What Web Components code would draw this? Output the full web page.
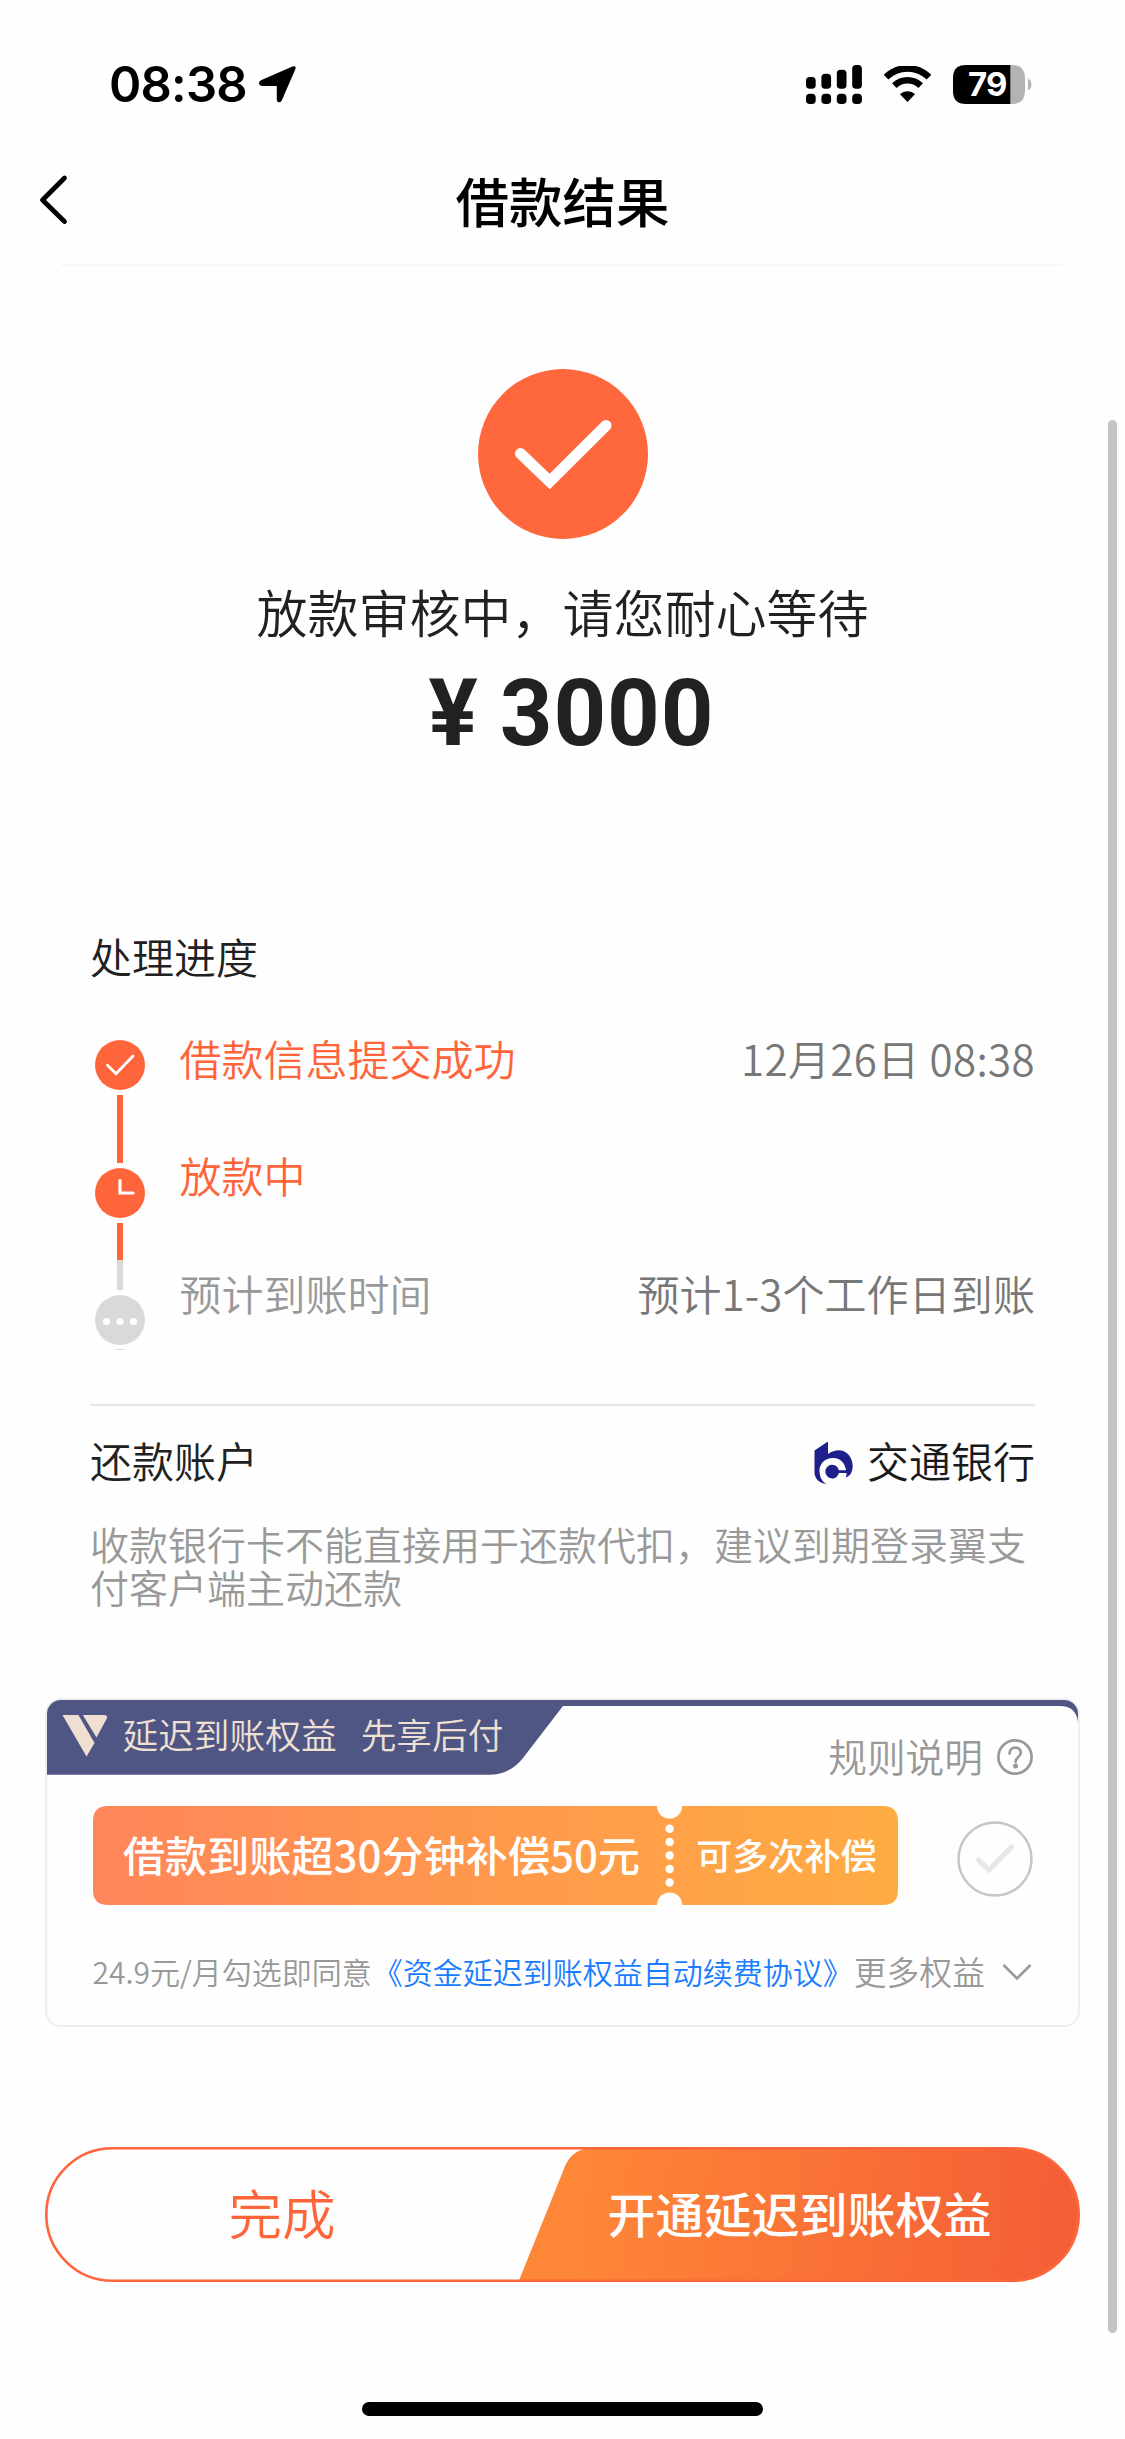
<!DOCTYPE html>
<html lang="zh-CN">
<head>
<meta charset="utf-8">
<title>借款结果</title>
<style>
html,body{margin:0;padding:0}
body{width:1125px;height:2439px;overflow:hidden;position:relative;background:#fefefe;color:#212121;font-family:"Noto Sans CJK SC",sans-serif;
--brand:#ff653b;--muted:#999;--soft:#777}
</style>
</head>
<body>
<status-bar time="08:38" battery="79"></status-bar>
<nav-bar>借款结果</nav-bar>
<result-summary amount="3000">放款审核中，请您耐心等待</result-summary>
<progress-panel>
  <span slot="title">处理进度</span>
  <step-row state="done"><span>借款信息提交成功</span><span slot="value" style="letter-spacing:.4px">12月26日 08:38</span></step-row>
  <step-row state="active"><span>放款中</span></step-row>
  <step-row state="pending"><span>预计到账时间</span><span slot="value" style="letter-spacing:.1px">预计1-3个工作日到账</span></step-row>
</progress-panel>
<account-info>
  <span slot="label">还款账户</span>
  <span slot="bank">交通银行</span>
  <span slot="note">收款银行卡不能直接用于还款代扣，建议到期登录翼支付客户端主动还款</span>
</account-info>
<benefit-card>
  <span slot="name">延迟到账权益</span>
  <span slot="tag">先享后付</span>
  <span slot="rules">规则说明</span>
  <coupon-ticket slot="ticket"><span>借款到账超30分钟补偿50元</span><span slot="extra">可多次补偿</span></coupon-ticket>
  <span slot="terms">24.9元/月勾选即同意</span>
  <span slot="link">《资金延迟到账权益自动续费协议》</span>
  <span slot="more">更多权益</span>
</benefit-card>
<action-bar><span slot="secondary">完成</span><span slot="primary">开通延迟到账权益</span></action-bar>
<home-indicator></home-indicator>
<scroll-thumb></scroll-thumb>
<script>
const define = (name, html) => customElements.define(name, class extends HTMLElement {
  connectedCallback() {
    if (this.shadowRoot) return;
    const root = this.attachShadow({ mode: 'open' });
    root.innerHTML = html.replace(/\{(\w+)\}/g, (_, k) => this.getAttribute(k) || '');
  }
});

define('status-bar', `
<style>
:host{display:flex;box-sizing:border-box;height:120px;padding:48px 93px 0 109px;align-items:center;color:#000;font-family:Inter,sans-serif}
.time{font-size:49px;font-weight:600;letter-spacing:-.8px;line-height:60px;width:149px;padding-top:1px}
.right{margin-left:auto;display:flex;align-items:center}
svg{display:block}
.bat{display:grid}
.bat>*{grid-area:1/1}
.bat b{font-size:33px;line-height:39px;font-weight:700;color:#fff;padding-left:15px;letter-spacing:-.8px}
</style>
<span class="time">{time}</span>
<svg width="40" height="40" viewBox="0 0 40 40"><path d="M3.5 16 34.5 2.6Q38.6 1.2 37.4 5L24 36Q22.6 39 20.4 38.2Q18.8 37.6 18.8 35.6V22H4.4Q1 21.6 1 19Q1 17.2 3.5 16Z"/></svg>
<div class="right">
<svg width="56" height="39" viewBox="0 0 56 39" style="margin-right:21px"><rect y="12" width="9.7" height="11.8" rx="3.8"/><rect x="15.4" y="8.8" width="9.7" height="15" rx="3.8"/><rect x="30.8" y="4.8" width="9.7" height="19" rx="3.8"/><rect x="46.2" width="9.7" height="23.8" rx="3.8"/><rect y="28.8" width="9.7" height="10.2" rx="3.8"/><rect x="15.4" y="28.8" width="9.7" height="10.2" rx="3.8"/><rect x="30.8" y="28.8" width="9.7" height="10.2" rx="3.8"/><rect x="46.2" y="28.8" width="9.7" height="10.2" rx="3.8"/></svg>
<svg width="49" height="36" viewBox="0 0 49 36" style="margin-right:21px"><path d="M3 11.2C15-.6 34-.6 46 11.2M11.3 19.6C19 12.5 30 12.5 37.7 19.6" fill="none" stroke="#000" stroke-width="6.6"/><path d="M17 28.2C21.3 24.1 27.7 24.1 32 28.2L24.5 36Z"/></svg>
<div class="bat"><svg width="79" height="39" viewBox="0 0 79 39"><path d="M57 0h2q13 0 13 13v13q0 13-13 13h-2z" fill="#b3b3b3"/><path d="M57.3 0H13Q0 0 0 13v13q0 13 13 13h44.300z"/><path d="M75 13.500q3.400 2 3.400 6t-3.400 6z" fill="#b3b3b3"/></svg><b>{battery}</b></div>
</div>`);

define('nav-bar', `
<style>
:host{display:block;box-sizing:border-box;height:146px;padding-top:16px;color:#000}
.row{display:grid;grid-template-columns:1fr auto 1fr;align-items:center;height:128px}
svg{display:block;margin-left:38px}
h1{margin:0;font-size:53.500px;font-weight:500;line-height:80px}
i{display:block;height:2px;margin:0 63px 0 61px;background:#f7f7f7}
</style>
<div class="row"><svg width="32" height="52" viewBox="0 0 32 52"><path d="M26.500 4 4.500 26 26.500 47.500" fill="none" stroke="#000" stroke-width="4.800" stroke-linecap="round" stroke-linejoin="round"/></svg><h1><slot></slot></h1></div><i></i>`);

define('result-summary', `
<style>
:host{display:flex;flex-direction:column;align-items:center;box-sizing:border-box;height:654px;padding-top:103px}
p{margin:42px 0 0;font-size:51px;line-height:60px;font-weight:350}
.amt{display:flex;gap:21px;margin:28px 0 0 18px;font-family:Roboto,sans-serif;font-size:92px;font-weight:700;line-height:90px;letter-spacing:.9px}
</style>
<svg width="170" height="170" viewBox="0 0 170 170"><circle cx="85" cy="85" r="85" fill="#ff673c"/><path d="M42.500 84.500 71.700 112.500 128 56.500" fill="none" stroke="#fff" stroke-width="11" stroke-linecap="round"/></svg>
<p><slot></slot></p>
<div class="amt"><span>¥</span><span>{amount}</span></div>`);

define('step-icon', `
<style>
:host{display:block;width:50px;height:50px}
svg{display:none}
:host([state=done]) .done,:host([state=active]) .active,:host([state=pending]) .pending{display:block}
</style>
<svg class="done" width="50" height="50"><circle cx="25" cy="25" r="25" fill="#ff653b"/><path d="M12.500 25.300 21 33.700 38 16" fill="none" stroke="#fff" stroke-width="2.800" stroke-linecap="round"/></svg>
<svg class="active" width="50" height="50"><circle cx="25" cy="25" r="25" fill="#ff653b"/><path d="M25 12.500V25H38" fill="none" stroke="#fff" stroke-width="3.200" stroke-linecap="round"/></svg>
<svg class="pending" width="50" height="50"><circle cx="25" cy="25" r="25" fill="#d9d9d9"/><g fill="#fff"><circle cx="11.500" cy="26.500" r="3.600"/><circle cx="25" cy="26.500" r="3.600"/><circle cx="38.500" cy="26.500" r="3.600"/></g></svg>`);

define('step-row', `
<style>
:host{display:flex;justify-content:space-between;font-size:42px;line-height:60px;font-weight:350;color:var(--brand)}
:host([state=pending]){color:var(--muted)}
.v{color:var(--soft)}
</style>
<slot></slot><span class="v"><slot name="value"></slot></span>`);

define('progress-panel', `
<style>
:host{display:block;box-sizing:border-box;height:486px;padding:6px 90px 0}
.title{font-size:42px;line-height:60px;font-weight:350}
.body{display:flex;gap:34.500px;height:376px;margin-top:42px;border-bottom:2px solid #e6e6e6}
.rail{display:flex;flex-direction:column;align-items:center;width:50px;margin-left:5px;padding-top:12px}
.rail i{width:5.500px}
.rows{flex:1;display:flex;flex-direction:column;gap:57.300px}
</style>
<div class="title"><slot name="title"></slot></div>
<div class="body">
<div class="rail"><step-icon state="done"></step-icon><i style="height:68px;margin:5px 0 4.700px;background:#ff653b"></i><step-icon state="active"></step-icon><i style="height:37.300px;margin-top:5.500px;background:#ff653b"></i><i style="height:30px;margin-bottom:4.700px;background:#d9d9d9"></i><step-icon state="pending"></step-icon><i style="height:1px;margin-top:4px;background:#d9d9d9"></i></div>
<div class="rows"><slot></slot></div>
</div>`);

define('bank-logo', `
<style>:host{display:block}svg{display:block}</style>
<svg width="40" height="44" viewBox="0 0 40 44" fill="#1d1f8a"><path d="M.5 9.500 14 .5V13C27 3.500 39 13 38.700 25.500Q38.500 34 31.500 36.800Q33 34 32.600 32H24.800A6.800 6.800 0 1 1 24.800 29.200H32C31 22 26.500 17 19.500 17C9 17 5 24.500 5.500 31C6 38 9.500 41.500 12.500 43C5 42.500.5 37 .5 31.500Z"/></svg>`);

define('account-info', `
<style>
:host{display:block;padding:24px 90px 0}
.row{display:flex;align-items:center;font-size:42px;line-height:60px;font-weight:350}
bank-logo{margin:6px 13px 0 auto}
.bank{color:#1a1a1a}
p{margin:32px 0 0;font-size:39px;line-height:43px;font-weight:350;color:var(--muted)}
</style>
<div class="row"><slot name="label"></slot><bank-logo></bank-logo><span class="bank"><slot name="bank"></slot></span></div>
<p><slot name="note"></slot></p>`);

define('coupon-ticket', `
<style>
:host{display:grid;width:805px;height:99px;font-weight:500;color:#fff}
svg,.t{grid-area:1/1}
svg{display:block}
.t{display:flex;align-items:center;line-height:60px;padding-left:30px;padding-bottom:4px;font-size:42px;letter-spacing:.1px}
.x{font-size:36px;margin-left:56px}
</style>
<svg width="805" height="99"><defs><linearGradient id="g"><stop stop-color="#ff865b"/><stop offset=".5" stop-color="#ff994c"/><stop offset="1" stop-color="#ffac43"/></linearGradient></defs><path fill="url(#g)" d="M15 0H564A12.600 12.600 0 0 0 589.200 0H790Q805 0 805 15V84Q805 99 790 99H589.200A12.600 12.600 0 0 0 564 99H15Q0 99 0 84V15Q0 0 15 0Z"/><g fill="#fff"><circle cx="576.600" cy="22.700" r="4.200"/><circle cx="576.600" cy="36" r="4.200"/><circle cx="576.600" cy="49.500" r="4.200"/><circle cx="576.600" cy="63" r="4.200"/><circle cx="576.600" cy="76.500" r="4.200"/></g></svg>
<div class="t"><slot></slot><span class="x"><slot name="extra"></slot></span></div>`);

define('benefit-card', `
<style>
:host{display:grid;box-sizing:border-box;width:1035px;height:329px;margin:90px 0 0 45px;border:2px solid #eee;border-radius:16px;overflow:hidden;font-weight:350}
.bg,.in{grid-area:1/1}
svg{display:block}
.in{display:flex;flex-direction:column;padding:0 45px 0 15px}
.head{display:flex;align-items:flex-start;height:106px}
.brand{display:flex;align-items:center;height:68px;color:#eee0d3;font-size:35.700px;line-height:60px}
.brand svg{margin:3px 14.500px 0 0}
.tag{margin-left:24px}
.rules{display:flex;align-items:center;gap:14px;margin:25px 0 0 auto;font-size:38.700px;line-height:60px;color:var(--muted)}
.rules svg{margin-top:4px}
.mid{display:flex;justify-content:space-between;align-items:center;padding-left:31px}
.mid>svg{margin-top:7px}
.foot{display:flex;align-items:center;padding-left:30.500px;margin-top:36px;font-size:30px;line-height:60px;color:var(--muted);white-space:nowrap}
.link{color:#1a7dff;margin-left:1px}
.more{font-size:32.800px;margin-left:1px}
.foot svg{margin:2px 1px 0 auto}
</style>
<svg class="bg" width="1031" height="325" viewBox="47 1700 1031 325"><path fill="#505684" d="M47 1700H1078V1722Q1076 1706 1060 1706H563L523 1758Q510 1774.700 489 1774.700H47Z"/></svg>
<div class="in">
<div class="head"><div class="brand"><svg width="46" height="42" viewBox="0 0 46 42" fill="#eedfd0"><path d="M.5 0H16.500L32.500 28 24.500 41.500Z"/><path d="M20.800 0H42Q46 0 44.800 3.500L34.500 22.500Z"/></svg><slot name="name"></slot><span class="tag"><slot name="tag"></slot></span></div>
<div class="rules"><slot name="rules"></slot><svg width="36" height="36" viewBox="0 0 36 36" fill="none" stroke="#999" stroke-width="2.700"><circle cx="18" cy="18" r="16.600"/><path d="M12.500 14.500C12.700 6.500 24.200 7 23.800 14C23.500 18 18.600 18.300 18.600 22.800" stroke-linecap="round"/><circle cx="18.600" cy="27" r="1.200" fill="#999"/></svg></div></div>
<div class="mid"><slot name="ticket"></slot><svg width="76" height="76" viewBox="0 0 76 76" fill="none"><circle cx="38" cy="38" r="36.500" stroke="#c6c6c6" stroke-width="2.500"/><path d="M21.500 39 32 49 54.500 26" stroke="#e6e6e6" stroke-width="5" stroke-linecap="round"/></svg></div>
<div class="foot"><slot name="terms"></slot><span class="link"><slot name="link"></slot></span><span class="more"><slot name="more"></slot></span><svg width="30" height="18" viewBox="0 0 30 18"><path d="M1.500 2 15 15.500 28.500 2" fill="none" stroke="#999" stroke-width="2.600"/></svg></div>
</div>`);

define('action-bar', `
<style>
:host{display:grid;width:1035px;height:135px;margin:120px 0 0 45px}
svg,.in{grid-area:1/1}
svg{display:block}
.in{display:grid;grid-template-columns:474px 1fr;align-items:center;justify-items:center;line-height:80px;padding-bottom:6px}
.a{font-size:53.500px;font-weight:350;color:var(--brand)}
.b{font-size:48px;font-weight:500;color:#fff}
</style>
<svg width="1035" height="135"><defs><linearGradient id="g" gradientUnits="userSpaceOnUse" x1="540" x2="1010" y1="0" y2="30"><stop stop-color="#fe8637"/><stop offset="1" stop-color="#f55f36"/></linearGradient></defs><path fill="url(#g)" d="M474 133.500 520.500 18Q528 2 545 1.500H967A66 66 0 0 1 967 133.500Z"/><rect x="1.300" y="1.300" width="1032.400" height="132.400" rx="66.200" fill="none" stroke="#ff653b" stroke-width="2.600"/></svg>
<div class="in"><span class="a"><slot name="secondary"></slot></span><span class="b"><slot name="primary"></slot></span></div>`);

define('home-indicator', `<style>:host{display:block;width:401px;height:14px;margin:120px auto 0;border-radius:7px;background:#000}</style>`);
define('scroll-thumb', `<style>:host{display:block;position:absolute;left:1108px;top:420px;width:9px;height:1913px;border-radius:5px;background:#c4c4c4}</style>`);
</script>
</body>
</html>
